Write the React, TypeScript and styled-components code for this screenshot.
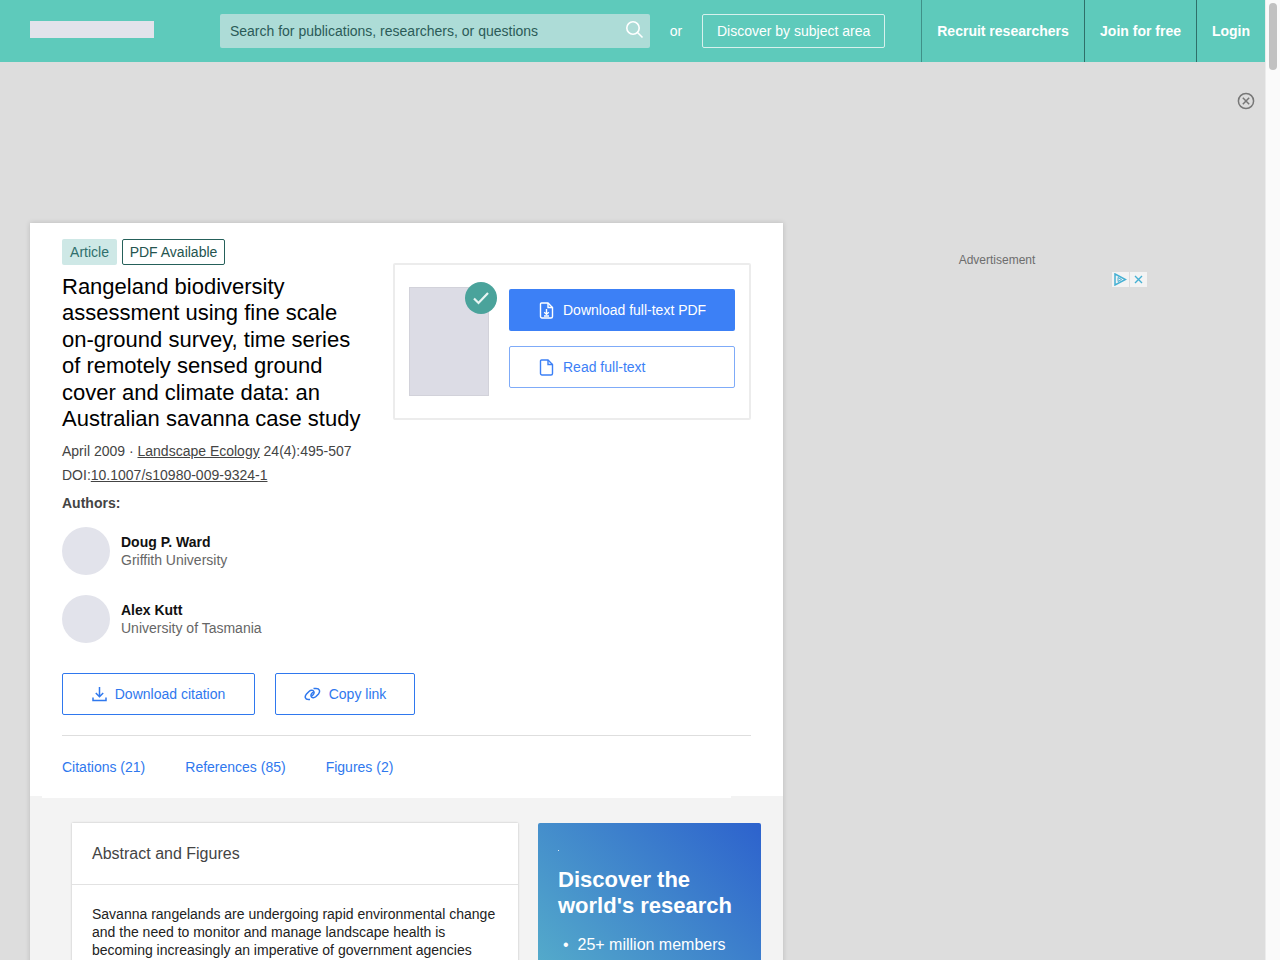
import React from "react";
import styled, { createGlobalStyle } from "styled-components";

const Global = createGlobalStyle`
  html, body { margin: 0; padding: 0; height: 100%; overflow: hidden; background: #dddddd; }
  body { font-family: "Liberation Sans", Arial, sans-serif; color: #111; }
  * { box-sizing: border-box; }
`;
const Shell = styled.div`display: flex; width: 1280px; height: 960px; overflow: hidden;`;
const Page = styled.div`width: 1265px; flex: none; display: flex; flex-direction: column;`;
const Scrollbar = styled.div`width: 15px; flex: none; background: #fafafa; border-left: 1px solid #ececec; padding: 3px 3px 0 3px;`;
const Thumb = styled.div`width: 8px; height: 67px; background: #c1c1c1; border-radius: 4px;`;

const Header = styled.header`height: 62px; flex: none; background: #5ecabb; display: flex; align-items: stretch; padding-left: 30px;`;
const Logo = styled.div`width: 124px; height: 17px; background: #e2e3eb; align-self: center; margin-right: 66px; margin-bottom: 3px;`;
const Search = styled.div`width: 430px; height: 34px; margin-top: 14px; background: #addcd7; border-radius: 2px; display: flex; align-items: center; justify-content: space-between; padding: 0 6px 4px 10px; font-size: 14px; color: #2b5b57;`;
const SearchText = styled.span`margin-top: 4px;`;
const Or = styled.span`color: #fff; font-size: 14px; margin: 0 20px 0 20px; align-self: center;`;
const Discover = styled.div`width: 183px; height: 34px; margin-top: 14px; border: 1px solid #d7f1ed; border-radius: 2px; color: #fff; font-size: 14px; display: flex; align-items: center; justify-content: center;`;
const Nav = styled.nav`display: flex; margin-left: 36px;`;
const NavItem = styled.div<{ $w: number; $c: string }>`
  width: ${p => p.$w}px; border-left: 1px solid ${p => p.$c}; color: #fff; font-size: 14px; font-weight: 700;
  display: flex; align-items: center; justify-content: center;
`;
const AdBand = styled.div`height: 161px; flex: none; display: flex; justify-content: flex-end; padding: 30px 10px 0 0;`;
const Body = styled.div`display: flex; align-items: flex-start; flex: 1;`;
const Card = styled.main`margin-left: 30px; width: 753px; flex: none; background: #f3f3f3; box-shadow: 0 0 5px rgba(0,0,0,.16);`;
const Top = styled.section`background: #fff; padding: 16px 32px 0 32px; height: 573px;`;
const TopLip = styled.div`height: 2px; background: #fff; margin: 0 52px 0 12px;`;
const TopGrid = styled.div`display: flex; justify-content: space-between;`;
const Left = styled.div`width: 310px;`;
const Tags = styled.div`display: flex; gap: 5px; margin-bottom: 9px;`;
const TagA = styled.span`height: 26px; width: 55px; background: #cee8e6; color: #2f6f6c; font-size: 14px; border-radius: 2px; display: flex; align-items: center; justify-content: center;`;
const TagB = styled.span`height: 26px; width: 103px; border: 1px solid #25605a; color: #25544f; font-size: 14px; border-radius: 2px; display: flex; align-items: center; justify-content: center;`;
const Title = styled.h1`margin: 0 0 6.4px 0; font-size: 22px; line-height: 26.4px; font-weight: 400; color: #000; width: 310px;`;
const Meta = styled.div`font-size: 14px; line-height: 24px; color: #444; white-space: nowrap;`;
const U = styled.span`text-decoration: underline;`;
const AuthorsLabel = styled.div`font-size: 14px; font-weight: 700; color: #444; line-height: 16px; margin: 8px 0 16px;`;
const Author = styled.div`display: flex; align-items: center; height: 48px; margin-bottom: 20px;`;
const Avatar = styled.div`width: 48px; height: 48px; border-radius: 50%; background: #e2e3eb; margin-right: 11px;`;
const AName = styled.div`font-size: 14px; font-weight: 700; color: #111; line-height: 18px;`;
const AOrg = styled.div`font-size: 14px; color: #666; line-height: 18px;`;

const PdfBox = styled.div`width: 358px; height: 157px; margin-top: 24px; border: 2px solid #ececec; border-radius: 2px; padding: 22px 14px 0 14px; display: flex; gap: 20px;`;
const Thumbnail = styled.div`position: relative; width: 80px; height: 109px; background: #dcdce5; border: 1px solid #d2d2da;`;
const Check = styled.div`position: absolute; top: -6px; right: -9px; width: 32px; height: 32px; border-radius: 50%; background: #4aa39b; display: flex; align-items: center; justify-content: center;`;
const Buttons = styled.div`flex: 1; display: flex; flex-direction: column; gap: 15px; padding-top: 2px;`;
const Primary = styled.div`height: 42px; background: #3c80f6; border-radius: 2px; color: #fff; font-size: 14px; display: flex; align-items: center; padding-left: 30px; gap: 9px;`;
const Secondary = styled.div`height: 42px; border: 1px solid #7fabf8; border-radius: 2px; color: #3c80f6; font-size: 14px; display: flex; align-items: center; padding-left: 29px; gap: 9px;`;
const Actions = styled.div`display: flex; gap: 20px; margin-top: 10px;`;
const Action = styled.div<{ $w: number }>`width: ${p => p.$w}px; height: 42px; border: 1px solid #2f78ee; border-radius: 2px; color: #2f78ee; font-size: 14px; display: flex; align-items: center; justify-content: center; gap: 8px;`;
const Divider = styled.div`height: 1px; background: #dedede; margin-top: 20px;`;
const Tabs = styled.div`display: flex; gap: 40px; color: #2f78ee; font-size: 14px; margin-top: 23px; line-height: 16px;`;

const Lower = styled.section`display: flex; gap: 20px; padding: 25px 22px 0 42px; height: 200px; overflow: hidden; align-items: flex-start;`;
const Abstract = styled.article`width: 446px; flex: none; background: #fff; box-shadow: 0 0 2px rgba(0,0,0,.22); min-height: 200px;`;
const AbHead = styled.h2`margin: 0; height: 62px; padding-left: 20px; font-size: 16px; font-weight: 400; color: #444; display: flex; align-items: center; border-bottom: 1px solid #e2e2e2;`;
const AbText = styled.p`margin: 0; padding: 20px 20px 0 20px; font-size: 14px; line-height: 18px; color: #222;`;
const Promo = styled.aside`position: relative; width: 223px; height: 200px; border-radius: 2px; color: #fff; background: linear-gradient(45deg, #5ab6ca 0%, #2d62cd 100%); padding: 44px 20px 0 20px;`;
const PromoDot = styled.span`position: absolute; left: 20px; top: 27px; width: 1px; height: 1px; background: #dfeaf5;`;
const PromoTitle = styled.h3`margin: 0 0 14px; font-size: 22px; line-height: 26px; font-weight: 700; white-space: nowrap;`;
const PromoItem = styled.div`font-size: 16px; line-height: 24px; padding-left: 5px; white-space: nowrap;`;
const Side = styled.div`width: 424px; flex: none; display: flex; flex-direction: column; align-items: center; padding-top: 30px; font-size: 12px; color: #6d6d6d;`;
const AdLabel = styled.div`margin-left: 4px; line-height: 14px;`;
const AdIcons = styled.div`display: flex; gap: 1px; margin: 5px 0 0 268px;`;
const AdIcon = styled.div`width: 17px; height: 15px; background: #f3f3f3; display: flex; align-items: center; justify-content: center;`;

export default function App() {
  return (
    <Shell>
      <Global />
      <Page>
        <Header>
          <Logo />
          <Search>
            <SearchText>Search for publications, researchers, or questions</SearchText>
            <svg width="19" height="19" viewBox="0 0 19 19" fill="none" stroke="#fff" strokeWidth="1.6"><circle cx="8" cy="8" r="6.2" /><path d="M12.5 12.5L17.5 17.5" /></svg>
          </Search>
          <Or>or</Or>
          <Discover>Discover by subject area</Discover>
          <Nav>
            <NavItem $w={163} $c="#3f9088">Recruit researchers</NavItem>
            <NavItem $w={112} $c="#2f6f69">Join for free</NavItem>
            <NavItem $w={69} $c="#2f6f69">Login</NavItem>
          </Nav>
        </Header>
        <AdBand>
          <svg width="18" height="18" viewBox="0 0 18 18" fill="none" stroke="#777" strokeWidth="1.5"><circle cx="9" cy="9" r="7.6" /><path d="M5.8 5.8L12.2 12.2M12.2 5.8L5.8 12.2" /></svg>
        </AdBand>
        <Body>
          <Card>
            <Top>
              <TopGrid>
                <Left>
                  <Tags><TagA>Article</TagA><TagB>PDF Available</TagB></Tags>
                  <Title>Rangeland biodiversity assessment using fine scale on-ground survey, time series of remotely sensed ground cover and climate data: an Australian savanna case study</Title>
                  <Meta>April 2009 · <U>Landscape Ecology</U> 24(4):495-507</Meta>
                  <Meta>DOI:<U>10.1007/s10980-009-9324-1</U></Meta>
                  <AuthorsLabel>Authors:</AuthorsLabel>
                  <Author><Avatar /><div><AName>Doug P. Ward</AName><AOrg>Griffith University</AOrg></div></Author>
                  <Author><Avatar /><div><AName>Alex Kutt</AName><AOrg>University of Tasmania</AOrg></div></Author>
                </Left>
                <PdfBox>
                  <Thumbnail>
                    <Check>
                      <svg width="18" height="14" viewBox="0 0 18 14" fill="none" stroke="#e8f5f3" strokeWidth="2.2"><path d="M2 7.5L6.5 12L16 2" /></svg>
                    </Check>
                  </Thumbnail>
                  <Buttons>
                    <Primary>
                      <svg width="15" height="17" viewBox="0 0 15 17" fill="none" stroke="#fff" strokeWidth="1.4"><path d="M2.5 1H9L13.5 5.5V14.5A1.5 1.5 0 0 1 12 16H3A1.5 1.5 0 0 1 1.5 14.5V2A1 1 0 0 1 2.5 1Z" /><path d="M9 1V5.5H13.5" /><path d="M7.5 7V12M5.2 10.2L7.5 12.4L9.8 10.2M5 14H10" /></svg>
                      Download full-text PDF
                    </Primary>
                    <Secondary>
                      <svg width="15" height="17" viewBox="0 0 15 17" fill="none" stroke="#3c80f6" strokeWidth="1.4"><path d="M2.5 1H9L13.5 5.5V14.5A1.5 1.5 0 0 1 12 16H3A1.5 1.5 0 0 1 1.5 14.5V2A1 1 0 0 1 2.5 1Z" /><path d="M9 1V5.5H13.5" /></svg>
                      Read full-text
                    </Secondary>
                  </Buttons>
                </PdfBox>
              </TopGrid>
              <Actions>
                <Action $w={193}>
                  <svg width="15" height="16" viewBox="0 0 15 16" fill="none" stroke="#2f78ee" strokeWidth="1.5"><path d="M7.5 1V10.5M3.8 7L7.5 10.7L11.2 7M1 11.5V14.5H14V11.5" /></svg>
                  Download citation
                </Action>
                <Action $w={140}>
                  <svg width="17" height="14" viewBox="0 0 17 14" fill="none" stroke="#2f78ee" strokeWidth="1.5"><path d="M6 12.5H4.5C1 12.5 0.3 9.5 2.5 7L5 4.5C7 2.6 9.5 3 10 5C10.4 6.6 9 8.5 7.3 8.8" /><path d="M9.5 1.5H12C15.7 1.5 16.6 4.5 14.5 7L12 9.5C10 11.4 7.5 11 7 9C6.6 7.4 8 5.5 9.7 5.2" /></svg>
                  Copy link
                </Action>
              </Actions>
              <Divider />
              <Tabs><span>Citations (21)</span><span>References (85)</span><span>Figures (2)</span></Tabs>
            </Top>
            <TopLip />
            <Lower>
              <Abstract>
                <AbHead>Abstract and Figures</AbHead>
                <AbText>Savanna rangelands are undergoing rapid environmental change and the need to monitor and manage landscape health is becoming increasingly an imperative of government agencies</AbText>
              </Abstract>
              <Promo>
                <PromoDot />
                <PromoTitle>Discover the<br />world's research</PromoTitle>
                <PromoItem>• &nbsp;25+ million members</PromoItem>
              </Promo>
            </Lower>
          </Card>
          <Side>
            <AdLabel>Advertisement</AdLabel>
            <AdIcons>
              <AdIcon><svg width="14" height="13" viewBox="0 0 14 13" fill="none" stroke="#45b0d3" strokeWidth="1.5"><path d="M2 1L12.5 6.5L2 12Z" /><path d="M5 4.5L8.5 6.5L5 8.5Z" strokeWidth="1" /></svg></AdIcon>
              <AdIcon><svg width="9" height="9" viewBox="0 0 9 9" fill="none" stroke="#45b0d3" strokeWidth="1.4"><path d="M1 1L8 8M8 1L1 8" /></svg></AdIcon>
            </AdIcons>
          </Side>
        </Body>
      </Page>
      <Scrollbar><Thumb /></Scrollbar>
    </Shell>
  );
}
